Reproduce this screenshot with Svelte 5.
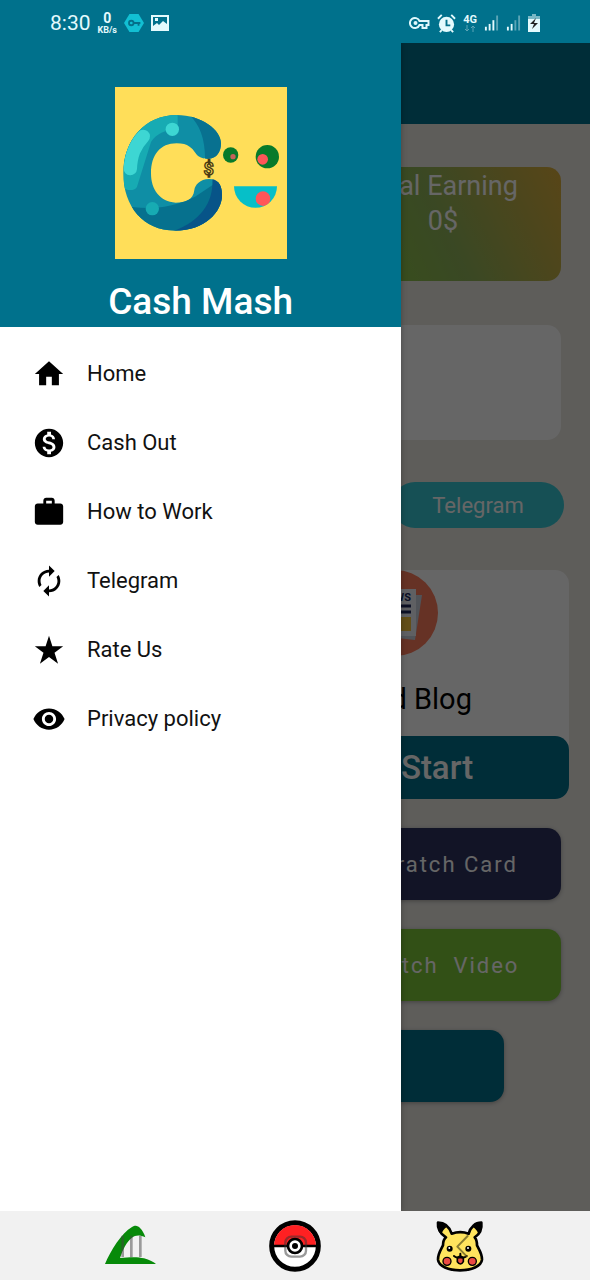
<script lang="ts">
  type MenuIcon = "home" | "cash" | "work" | "sync" | "star" | "eye";

  const menuItems: Array<{ icon: MenuIcon; label: string }> = [
    { icon: "home", label: "Home" },
    { icon: "cash", label: "Cash Out" },
    { icon: "work", label: "How to Work" },
    { icon: "sync", label: "Telegram" },
    { icon: "star", label: "Rate Us" },
    { icon: "eye", label: "Privacy policy" },
  ];

  const iconPaths: Record<MenuIcon, string> = {
    home: "M10 20v-6h4v6h5v-8h3L12 3 2 12h3v8z",
    cash: "M12 2C6.48 2 2 6.48 2 12s4.48 10 10 10 10-4.48 10-10S17.52 2 12 2zm1.41 16.09V20h-2.67v-1.93c-1.71-.36-3.16-1.46-3.27-3.4h1.96c.1 1.05.82 1.87 2.65 1.87 1.96 0 2.4-.98 2.4-1.59 0-.83-.44-1.61-2.67-2.14-2.48-.6-4.18-1.62-4.18-3.67 0-1.72 1.39-2.84 3.11-3.21V4h2.67v1.95c1.86.45 2.79 1.86 2.85 3.39H14.3c-.05-1.11-.64-1.87-2.22-1.87-1.5 0-2.4.68-2.4 1.64 0 .84.65 1.39 2.67 1.91s4.18 1.39 4.18 3.91c-.01 1.83-1.38 2.83-3.12 3.16z",
    work: "M20 6h-4V4c0-1.11-.89-2-2-2h-4c-1.11 0-2 .89-2 2v2H4c-1.11 0-1.99.89-1.99 2L2 19c0 1.11.89 2 2 2h16c1.11 0 2-.89 2-2V8c0-1.11-.89-2-2-2zm-6 0h-4V4h4v2z",
    sync: "M12 6v3l4-4-4-4v3c-4.42 0-8 3.58-8 8 0 1.57.46 3.03 1.24 4.26L6.7 14.8c-.45-.83-.7-1.79-.7-2.8 0-3.31 2.69-6 6-6zm6.76 1.74L17.3 9.2c.44.84.7 1.79.7 2.8 0 3.31-2.69 6-6 6v-3l-4 4 4 4v-3c4.42 0 8-3.58 8-8 0-1.57-.46-3.03-1.24-4.26z",
    star: "M12 2l2.4 7.4H22l-6.1 4.5 2.5 7.8L12 16.9l-6.4 4.8 2.5-7.8L2 9.4h7.6z",
    eye: "M12 4.5C7 4.5 2.73 7.61 1 12c1.73 4.39 6 7.5 11 7.5s9.27-3.11 11-7.5c-1.73-4.39-6-7.5-11-7.5zM12 17c-2.76 0-5-2.24-5-5s2.24-5 5-5 5 2.24 5 5-2.24 5-5 5zm0-8c-1.66 0-3 1.34-3 3s1.34 3 3 3 3-1.34 3-3-1.34-3-3-3z",
  };

  let drawerOpen = $state(true);
</script>

<div class="phone">
  <div class="status">
    <div class="status__group">
      <span class="status__time">8:30</span>
      <span class="status__speed"><b>0</b><small>KB/s</small></span>
      <svg class="status__vpn" viewBox="0 0 22 20">
        <path d="M6 0h10l6 10-6 10H6L0 10z" fill="#12bfd3" />
        <g fill="none" stroke="#04708a" stroke-width="2">
          <circle cx="8" cy="10" r="2.5" />
          <path d="M10.5 10H18M16 10v3" />
        </g>
      </svg>
      <svg class="status__photo" viewBox="0 0 18 16">
        <path fill="#e4fafd" fill-rule="evenodd" d="M0 0h18v16H0zM2 2v9l4-3 2 2 4-4 4 3V2zM4 3h3v3H4z" />
      </svg>
    </div>
    <div class="status__group">
      <svg class="status__key" viewBox="0 0 20 14" fill="none" stroke="#dff8fc" stroke-width="2">
        <path d="M10 5a5 5 0 1 0 0 4h3v3h4V9h2V5z" />
        <circle cx="6" cy="7" r="1" />
      </svg>
      <svg class="status__alarm" viewBox="0 0 20 20">
        <circle cx="10" cy="11" r="8" fill="#e4fafd" />
        <path d="M1 5l4-4M19 5l-4-4M5 17l-2 2M15 17l2 2" stroke="#e4fafd" stroke-width="2" />
        <path d="M10 6v6h4" fill="none" stroke="#04708a" stroke-width="2" />
      </svg>
      <span class="status__network">
        4G
        <svg viewBox="0 0 12 7" fill="none" stroke="#5ba5b6">
          <path d="M3 0v6M1 4l2 2 2-2M9 7V1M7 3l2-2 2 2" />
        </svg>
      </span>
      {#each [3, 2] as level}
        <svg class="status__signal" viewBox="0 0 16 18">
          {#each [0, 1, 2, 3] as bar}
            <rect
              x={bar * 4 + 1}
              y={[13, 10, 6, 1][bar]}
              width="2"
              height={[4, 7, 11, 16][bar]}
              fill={bar < level ? "#e4fafd" : "#5ba5b6"}
            />
          {/each}
        </svg>
      {/each}
      <svg class="status__battery" viewBox="0 0 12 18">
        <path d="M4 0h4v2h4v16H0V2h4z" fill="#e4fafd" />
        <path d="M4 0h4v2h4v3H0V2h4z" fill="#7ab8c6" />
        <path d="M8 4L2 10h4l-2 5 6-6H6z" fill="#222" />
      </svg>
    </div>
  </div>

  <div class="shell">
    <div class="appbar"></div>
    <main class="content">
      <div class="columns">
        <section class="earning">
          <p class="earning__title">Total Earning</p>
          <p>0$</p>
        </section>
      </div>
      <div class="banner"></div>
      <button type="button" class="pill">Telegram</button>
      <section class="blog">
        <svg class="blog__art" viewBox="0 0 86 86">
          <circle cx="43" cy="43" r="43" fill="#ff7d5e" />
          <path d="M28 25h42l-7 45-35-4z" fill="#c9cfdb" />
          <path d="M20 19h44v47H20z" fill="#eef1f8" />
          <text x="59" y="31" class="blog__news">NEWS</text>
          <path d="M26 36h33M26 42h33" stroke="#202a5c" stroke-width="3" />
          <path d="M40 47h19v14H40z" fill="#f5c33c" />
        </svg>
        <h2>Visited Blog</h2>
        <button type="button" class="blog__start">Let's&nbsp; Start</button>
      </section>
      <div class="columns">
        <button type="button" class="tile tile--navy">Scratch Card</button>
      </div>
      <div class="columns">
        <button type="button" class="tile tile--green">Watch&nbsp; Video</button>
      </div>
      <button type="button" class="tile tile--wide" aria-label="More"></button>
    </main>

    {#if drawerOpen}
      <button type="button" class="scrim" aria-label="Close menu" onclick={() => (drawerOpen = false)}></button>
      <aside class="drawer">
        <header class="drawer__header">
          <svg class="drawer__logo" viewBox="30 21 516 516">
            <defs>
              <clipPath id="letter">
                <path
                  d="M348 190C348 150 290 105 215 105C120 105 55 180 55 280C55 380 115 452 210 452C300 452 351 395 351 345C351 310 335 297 312 297C285 297 270 315 268 330C265 360 240 368 212 368C165 365 138 330 138 280C138 225 165 190 215 190C250 190 262 205 272 220C282 235 298 237 312 236C335 236 348 215 348 190Z"
                />
              </clipPath>
            </defs>
            <path d="M30 21h516v516H30z" fill="#ffde59" />
            <g clip-path="url(#letter)">
              <path d="M50 100h310v360H50z" fill="#0f8ea5" />
              <path d="M248 100c35 30 54 75 52 145h60V100z" fill="#087190" />
              <path d="M50 375c60 15 140 15 220-25l90-60v170H50z" fill="#06718e" />
              <path d="M322 290c5 75-30 130-118 164h160V290z" fill="#075488" />
              <path d="M130 100h88v50c-32-2-62 8-80 36L96 320c-5 15-38 12-42 0L40 240z" fill="#17abb3" />
              <path d="M76 266c2-40 12-68 39-97" fill="none" stroke="#3dd6d3" stroke-width="40" stroke-linecap="round" />
              <circle cx="202" cy="148" r="20" fill="#3dd6d3" />
            </g>
            <circle cx="142" cy="386" r="20" fill="#17abb3" />
            <text x="311" y="286" class="drawer__dollar">$</text>
            <circle cx="377" cy="225" r="23" fill="#087a2a" />
            <circle cx="384" cy="230" r="8" fill="#c5625a" />
            <circle cx="487" cy="230" r="35" fill="#087a2a" />
            <circle cx="473" cy="238" r="16" fill="#ff5558" />
            <path d="M387 319h129a64 64 0 0 1-129 0z" fill="#06bfc8" />
            <circle cx="474" cy="356" r="22" fill="#ff5558" />
          </svg>
          <h1>Cash Mash</h1>
        </header>
        <nav class="drawer__menu">
          {#each menuItems as item (item.label)}
            <a href={`#${item.icon}`}>
              <svg viewBox="0 0 24 24"><path d={iconPaths[item.icon]} /></svg>
              {item.label}
            </a>
          {/each}
        </nav>
      </aside>
    {/if}
  </div>

  <div class="navbar">
    <button type="button" aria-label="Recent apps">
      <svg viewBox="0 0 156 156">
        <path
          d="M3 132C20 92 52 40 84 21C94 14 102 17 108 24C116 32 121 42 124 52C108 44 94 45 84 53C67 66 57 88 48 114C77 111 103 110 120 115C136 120 150 127 156 132Z"
          fill="#078a09"
        />
        <path d="M56 47v64M82 47v64M109 47v64" stroke="#444" stroke-opacity="0.5" stroke-width="8" />
      </svg>
    </button>
    <button type="button" aria-label="Home screen">
      <svg viewBox="0 0 156 156">
        <circle cx="78" cy="78" r="70" fill="#fff" stroke="#000" stroke-width="15" />
        <path d="M15 78a63 63 0 0 1 126 0z" fill="#ff2022" />
        <path d="M10 78h136" stroke="#000" stroke-width="7" />
        <circle cx="78" cy="78" r="21" fill="#fff" stroke="#000" stroke-width="8" />
        <circle cx="78" cy="78" r="9" />
        <rect x="49" y="50" width="62" height="60" rx="18" fill="none" stroke="#333" stroke-opacity="0.5" stroke-width="7" />
      </svg>
    </button>
    <button type="button" aria-label="Back">
      <svg viewBox="0 0 156 156" stroke-linejoin="round" stroke-linecap="round">
        <path
          d="M36 52C18 42 10 24 12 8C32 8 46 21 53 41C70 35 88 35 104 41C109 21 124 8 142 8C144 24 138 42 122 52C128 58 129 66 129 76C134 86 145 102 144 119C142 139 112 151 78 151C44 151 14 139 12 119C11 102 22 86 27 76C27 66 29 58 36 52Z"
          fill="#ffe45e"
          stroke="#000"
          stroke-width="8"
        />
        <path d="M12 8C11 24 13 36 22 44C25 34 30 26 38 21C30 12 22 8 12 8ZM142 8C144 24 141 36 134 44C131 34 125 26 117 21C124 12 132 8 142 8Z" />
        <circle cx="39" cy="124" r="12" fill="#eb4a43" stroke="#000" stroke-width="4" />
        <circle cx="115" cy="124" r="12" fill="#eb4a43" stroke="#000" stroke-width="4" />
        <circle cx="47" cy="86" r="9" />
        <circle cx="103" cy="86" r="9" />
        <circle cx="46" cy="84" r="3" fill="#fff" />
        <circle cx="102" cy="84" r="3" fill="#fff" />
        <path d="M70 113v12q10 14 18 0v-12z" fill="#eb4a43" stroke="#000" stroke-width="5" />
        <path d="M60 108q10 9 19 0q9 9 19 0M79 101v7" fill="none" stroke="#000" stroke-width="6" />
        <path d="M101 48L70 80l28 29" fill="none" stroke="#5a531c" stroke-opacity="0.7" stroke-width="6" />
      </svg>
    </button>
  </div>
</div>

<style>
  :global(body) {
    margin: 0;
    font-family: Roboto, "Noto Sans", sans-serif;
  }

  .phone {
    display: flex;
    flex-direction: column;
    min-height: 100vh;
    background: #eae8e2;
  }

  button {
    border: 0;
    padding: 0;
    font: inherit;
    cursor: pointer;
  }

  h1,
  h2,
  p {
    margin: 0;
    font-weight: 400;
  }

  .status {
    display: flex;
    align-items: center;
    justify-content: space-between;
    box-sizing: border-box;
    height: 43px;
    padding: 3px 50px 0;
    background: #00718c;
    color: #e4fafd;
  }

  .status__group {
    display: flex;
    align-items: center;
    gap: 7px;
  }

  .status__time {
    font-size: 21px;
  }

  .status__speed {
    display: flex;
    flex-direction: column;
    align-items: center;
    font-size: 14px;
    line-height: 14px;
  }

  .status__speed small {
    font-size: 9px;
    font-weight: 700;
    line-height: 10px;
  }

  .status__network {
    display: flex;
    flex-direction: column;
    align-items: center;
    font-size: 11px;
    font-weight: 700;
    line-height: 11px;
  }

  .status__network svg {
    width: 12px;
    height: 7px;
  }

  .status__vpn {
    width: 20px;
    height: 20px;
  }

  .status__photo {
    width: 18px;
    height: 16px;
  }

  .status__key {
    width: 21px;
    height: 14px;
  }

  .status__alarm {
    width: 19px;
    height: 19px;
  }

  .status__signal {
    width: 15px;
    height: 18px;
  }

  .status__battery {
    width: 12px;
    height: 18px;
  }

  .shell {
    position: relative;
    display: flex;
    flex: 1;
    flex-direction: column;
  }

  .appbar {
    height: 81px;
    background: #00718c;
  }

  .content {
    display: flex;
    flex-direction: column;
    padding: 43px 29px;
  }

  .columns {
    display: grid;
    grid-template-columns: 1fr 1fr;
    gap: 60px;
  }

  .columns > * {
    grid-column: 2;
  }

  .earning {
    box-sizing: border-box;
    height: 114px;
    padding-top: 2px;
    border-radius: 14px;
    background: linear-gradient(65deg, #87cd3c, #91b45a 50%, #dcad3c);
    color: #fff;
    font-size: 27px;
    line-height: 35px;
    text-align: center;
    white-space: nowrap;
  }

  .earning__title {
    padding-right: 8px;
  }

  .banner {
    height: 115px;
    margin-top: 44px;
    border-radius: 14px;
    background: #fff;
  }

  .pill {
    align-self: flex-end;
    width: 172px;
    height: 46px;
    margin: 42px -3px 0 0;
    border-radius: 23px;
    background: #37c8d5;
    color: #fff;
    font-size: 22px;
  }

  .blog {
    display: flex;
    flex-direction: column;
    align-items: center;
    align-self: flex-end;
    width: 348px;
    margin: 42px -8px 0 0;
    border-radius: 14px;
    background: #fff;
  }

  .blog__art {
    width: 86px;
    height: 86px;
  }

  .blog__news {
    fill: #202a5c;
    font-size: 11px;
    font-weight: 700;
    text-anchor: end;
  }

  .blog h2 {
    margin: 23px 0 17px;
    font-size: 29px;
    line-height: 40px;
  }

  .blog__start {
    align-self: stretch;
    height: 63px;
    border-radius: 14px;
    background: #00718c;
    color: #fff;
    font-size: 33px;
    font-weight: 500;
  }

  .tile {
    height: 72px;
    margin-top: 29px;
    border-radius: 14px;
    box-shadow: 0 1px 4px rgb(0 0 0 / 30%);
    color: #fff;
    font-size: 22px;
    letter-spacing: 2px;
    white-space: nowrap;
  }

  .tile--navy {
    background: #2d3260;
  }

  .tile--green {
    background: #7dc837;
  }

  .tile--wide {
    margin-right: 57px;
    margin-left: 57px;
    background: #00718c;
  }

  .scrim {
    position: absolute;
    inset: 0;
    background: rgb(0 0 0 / 60%);
  }

  .drawer {
    position: absolute;
    inset: 0 auto 0 0;
    width: 68%;
    background: #fff;
    box-shadow: 0 0 6px rgb(0 0 0 / 30%);
    clip-path: inset(0 -12px 0 0);
  }

  .drawer__header {
    display: flex;
    flex-direction: column;
    align-items: center;
    gap: 18px;
    padding-top: 44px;
    background: #00718c;
  }

  .drawer__logo {
    width: 172px;
    height: 172px;
  }

  .drawer__dollar {
    fill: #ffde59;
    stroke: #4a3a12;
    stroke-width: 4px;
    font-size: 54px;
    font-weight: 700;
    text-anchor: middle;
  }

  .drawer h1 {
    color: #fff;
    font-size: 37px;
    font-weight: 500;
    line-height: 50px;
  }

  .drawer__menu {
    padding-top: 12px;
  }

  .drawer__menu a {
    display: flex;
    align-items: center;
    gap: 21px;
    height: 69px;
    padding-left: 32px;
    color: #111;
    font-size: 22px;
    text-decoration: none;
  }

  .drawer__menu svg {
    width: 34px;
    height: 34px;
    fill: #000;
  }

  .navbar {
    display: grid;
    grid-template-columns: repeat(3, 1fr);
    height: 69px;
    padding: 0 47px;
    background: #f1f1f1;
  }

  .navbar button {
    display: flex;
    align-items: center;
    justify-content: center;
    background: none;
  }

  .navbar svg {
    width: 52px;
    height: 52px;
  }
</style>
